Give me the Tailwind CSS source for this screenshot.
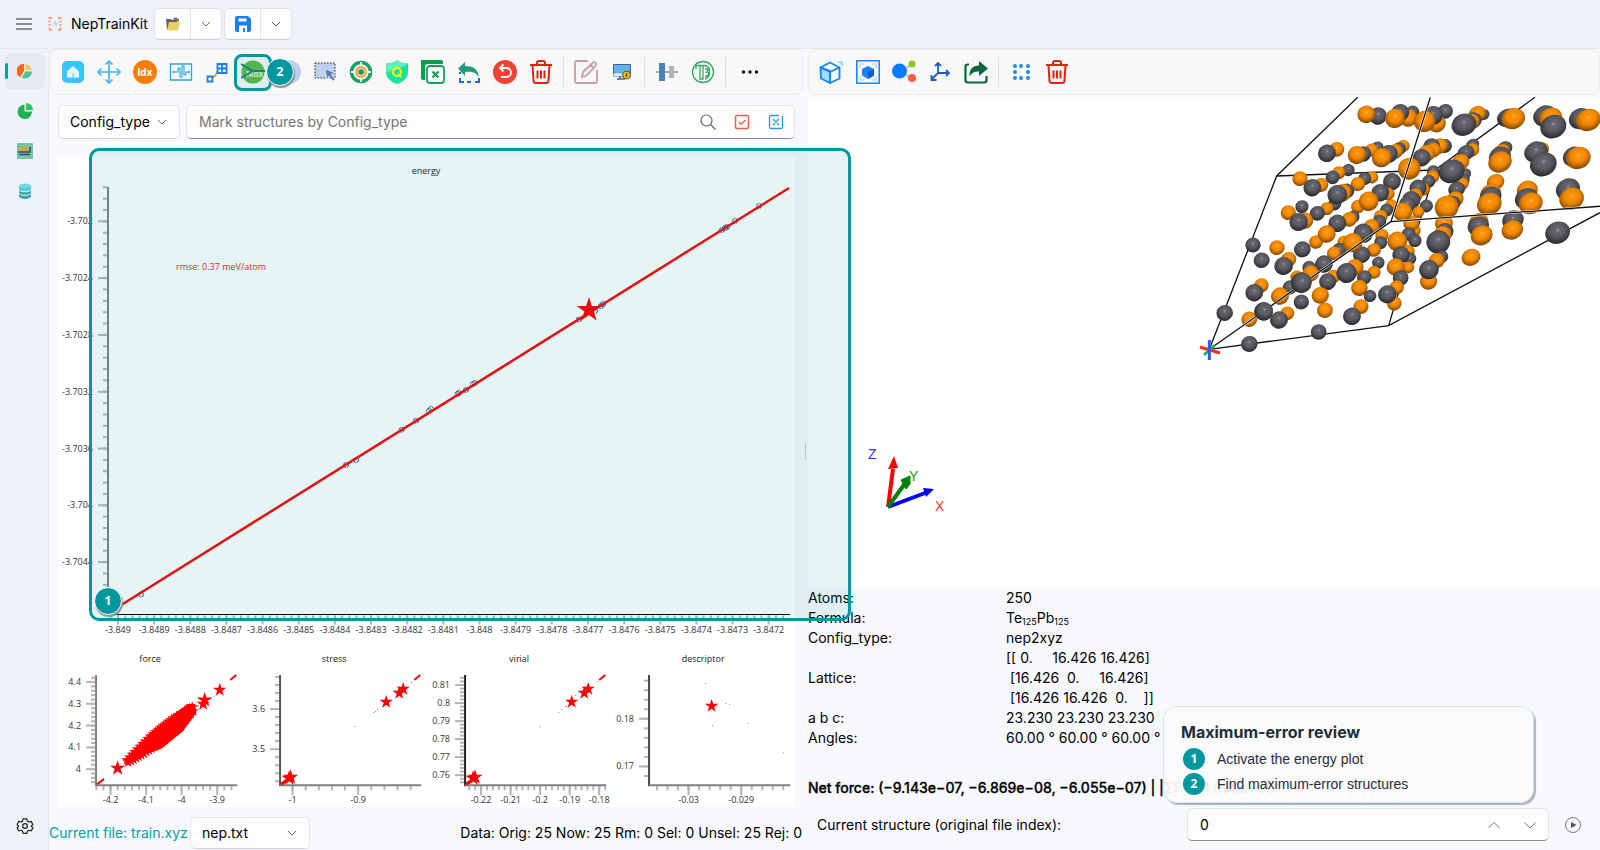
<!DOCTYPE html>
<html lang="en">
<head>
  <meta charset="UTF-8" />
  <meta name="viewport" content="width=device-width, initial-scale=1.0"/>
  <title>NepTrainKit</title>
  <script src="https://cdn.jsdelivr.net/npm/@tailwindcss/browser@4"></script>
</head>
<body class="bg-[#eff3f9] text-black text-sm leading-5 font-['Inter','Liberation_Sans',sans-serif] min-h-screen flex flex-col overflow-hidden">

  <!-- TITLE BAR -->
  <header class="h-12 shrink-0 flex items-center pl-4">
    <button aria-label="Menu" class="w-4 h-4">
      <svg viewBox="0 0 16 16" class="w-4 h-4" stroke="#6b6b6b" stroke-width="1.6"><path d="M0 3h16M0 8h16M0 13h16"/></svg>
    </button>
    <svg viewBox="0 0 14 14" class="w-[14px] h-[14px] ml-4 mr-2" fill="none">
      <path d="M1.500 0v14M12.500 0v14" stroke="#f59a9a" stroke-width="2" stroke-dasharray="2 1.500"/>
      <path d="M1 1h3M10 1h3M1 13h3M10 13h3" stroke="#f9a27a" stroke-width="2"/>
      <path d="M5 10l2-6 1 5 2-5" stroke="#a9d8f3" stroke-width="1"/>
    </svg>
    <h1 class="w-[84px] pl-px">NepTrainKit</h1>
    <div class="flex h-8 bg-[#fdfdfe] border border-[#e0e3e8] border-b-[#c8cbd0] rounded-[5px]">
      <button aria-label="Open" class="w-9 flex items-center justify-center border-r border-[#e0e3e8]">
        <svg viewBox="0 0 16 16" class="w-4 h-4"><path d="M1 3h5l1 1h5v10H2z" fill="#5f6368"/><path d="M8 2.500c2-1.500 4-1 5 .5l1-.5v3h-3l1-1c-1-1-2-1-3 0z" fill="#777"/><path d="M4 6h11l-2 8.500H2z" fill="#e6cf63"/></svg>
      </button>
      <button aria-label="Open options" class="w-[30px] flex items-center justify-center"><svg viewBox="0 0 10 10" class="w-[10px] h-[10px]" fill="none" stroke="#666"><path d="M1 3l4 4 4-4"/></svg></button>
    </div>
    <div class="flex h-8 ml-[2px] bg-[#fdfdfe] border border-[#e0e3e8] border-b-[#c8cbd0] rounded-[5px]">
      <button aria-label="Save" class="w-9 flex items-center justify-center border-r border-[#e0e3e8]">
        <svg viewBox="0 0 16 16" class="w-4 h-4"><path d="M2 0h11l3 3v11a2 2 0 0 1-2 2H2a2 2 0 0 1-2-2V2a2 2 0 0 1 2-2z" fill="#1a7ff0"/><path d="M3.500 2.500h8v3h-8zM4 9.500h8V16h-2v-4H8v4H4z" fill="#fff"/></svg>
      </button>
      <button aria-label="Save options" class="w-[30px] flex items-center justify-center"><svg viewBox="0 0 10 10" class="w-[10px] h-[10px]" fill="none" stroke="#666"><path d="M1 3l4 4 4-4"/></svg></button>
    </div>
  </header>

  <div class="flex flex-1">
    <!-- SIDE NAV -->
    <nav class="w-12 shrink-0 border-t border-[#e2e6ec] flex flex-col items-center pl-[2px] pt-1 pb-3">
      <button aria-label="Results" class="relative w-10 h-9 mb-[2px] rounded-md bg-[#e6eaf0] flex items-center justify-center">
        <span class="absolute left-0 top-[10px] w-[3px] h-4 rounded bg-[#009faa]"></span>
        <svg viewBox="0 0 16 16" class="w-4 h-4"><path d="M7 1v7l-4 6A7 7 0 0 1 7 1z" fill="#fb6514"/><path d="M8.500 1a7 7 0 0 1 6 6h-6z" fill="#fbc35c"/><path d="M8.500 8.500H15a7 7 0 0 1-10.500 6z" fill="#57c08f"/></svg>
      </button>
      <button aria-label="Chart" class="w-10 h-10 flex items-center justify-center"><svg viewBox="0 0 16 16" class="w-4 h-4" fill="#20b04f"><path d="M7.500 1.500v7H15a7.200 7.200 0 1 1-7.500-7z"/><path d="M9 0a7 7 0 0 1 7 7H9z" fill="#2fbf5e"/></svg></button>
      <button aria-label="Make data" class="w-10 h-10 flex items-center justify-center"><svg viewBox="0 0 16 16" class="w-4 h-4"><rect width="16" height="16" rx="1" fill="#74c5a7"/><path d="M3 3.500h4v5H3zM8 3.500h3v5H8z" fill="#f29c38"/><path d="M1 9h12V4M2 11.500h11" fill="none" stroke="#34515e" stroke-width="1.500"/></svg></button>
      <button aria-label="Database" class="w-10 h-10 flex items-center justify-center"><svg viewBox="0 0 16 16" class="w-4 h-4"><path d="M2 3v10c0 4 12 4 12 0V3z" fill="#41a3ab"/><path d="M2 3v4c0 3 12 3 12 0V3z" fill="#56c8d4"/><ellipse cx="8" cy="3" rx="6" ry="2.500" fill="#6fdbe6"/><path d="M2 6.500c0 3 12 3 12 0M2 10c0 3 12 3 12 0" fill="none" stroke="#d9f4f6"/></svg></button>
      <button aria-label="Settings" class="mt-auto w-10 h-6 flex items-center justify-center"><svg viewBox="0 0 24 24" class="w-[18px] h-[18px]" fill="none" stroke="#222" stroke-width="1.600" stroke-linejoin="round"><path d="M9.500 2.500h5l.7 3 2 1.200 3-.9 2.300 4.200-2.200 2.200 0 0 2.200 2.300-2.300 4.100-3-.9-2 1.200-.7 3h-5l-.7-3-2-1.200-3 .9-2.300-4.100 2.200-2.300-2.200-2.200 2.300-4.200 3 .9 2-1.200z"/><circle cx="12" cy="12" r="3.200"/></svg></button>
    </nav>

    <!-- WORKSPACE -->
    <main class="flex-1 min-w-0 flex bg-[#f8f9fd] border-t border-l border-[#e2e6ec] rounded-tl-lg">

      <!-- LEFT: PLOTS -->
      <section class="w-[754px] grow flex flex-col">
        <div class="relative h-[46px] ml-px flex items-center pl-1 bg-[#f8f8f8] border border-[#ececef] rounded-lg">
          <button aria-label="Home" class="w-9 flex justify-center"><svg viewBox="0 0 24 24" class="w-6 h-6"><rect x="1" y="1" width="22" height="22" rx="5" fill="#38c4fd"/><path d="M6.500 11.500L12 6.500l5.500 5V17h-11z" fill="#e8fbff" stroke="#e8fbff" stroke-linejoin="round"/><path d="M11 13h2.500v4H11z" fill="#9fe4fd"/></svg></button>
          <button aria-label="Pan" class="w-9 flex justify-center"><svg viewBox="0 0 24 24" class="w-6 h-6" fill="none" stroke="#42b4fb" stroke-width="1.700"><path d="M12 1v22M1 12h22M8.500 4.500L12 1l3.500 3.500M8.500 19.500L12 23l3.500-3.500M4.500 8.500L1 12l3.500 3.500M19.500 8.500L23 12l-3.500 3.500"/></svg></button>
          <button aria-label="Select by index" class="w-9 flex justify-center"><span class="w-6 h-6 rounded-full bg-[#f97d05] text-white text-[10px] leading-6 font-bold text-center">Idx</span></button>
          <button aria-label="Range" class="w-9 flex justify-center"><svg viewBox="0 0 24 24" class="w-6 h-6" fill="none" stroke="#2da2e0" stroke-width="1.300"><path d="M1.500 4h21v16h-21z"/><path d="M3 12h6V8h2v9h2V6h2v9h2v-3h4M5 10.500v3M20 10.500v3" stroke-width="1.100"/></svg></button>
          <button aria-label="Sample" class="w-9 flex justify-center"><svg viewBox="0 0 24 24" class="w-6 h-6" fill="none"><path d="M6 18l4-2 3-5" stroke="#f59c1a" stroke-width="1.800"/><path d="M12.500 4h9v9h-9zM17 4v9M12.500 8.500h9M2.500 16.500h5v5h-5z" stroke="#1b80e3" stroke-width="1.800"/></svg></button>
          <button aria-label="Max error" class="w-9 flex justify-center"><svg viewBox="0 0 24 24" class="w-6 h-6"><circle cx="12" cy="12" r="11.500" fill="#5cb944"/><text x="5" y="17" font-size="8" font-weight="700" fill="#d8f0d0">Mdx</text><path d="M0 4l12 7h12M12 11L0 18" fill="none" stroke="#1d7d7a" stroke-width="2"/></svg></button>
          <button aria-label="Sparse" class="w-9 flex justify-center"><svg viewBox="0 0 24 24" class="w-6 h-6"><circle cx="12" cy="12" r="12" fill="#bccdf0"/><circle cx="6" cy="12" r="10" fill="#7a9de0"/></svg></button>
          <button aria-label="Box select" class="w-9 flex justify-center"><svg viewBox="0 0 24 24" class="w-6 h-6"><path d="M2 3h20v15H2z" fill="#bfd0ee" stroke="#222" stroke-dasharray="1.500 1.500"/><path d="M12 9l10 4-4 1.500 4 5-2 1.500-4-5-2 3z" fill="#4a82b8" stroke="#fff" stroke-width=".5"/></svg></button>
          <button aria-label="Locate" class="w-9 flex justify-center"><svg viewBox="0 0 24 24" class="w-6 h-6" fill="none"><circle cx="12" cy="12" r="9.500" stroke="#12a365" stroke-width="3.500"/><path d="M12 2v5M12 17v5M2 12h5M17 12h5" stroke="#fff" stroke-width="1.800"/><circle cx="12" cy="12" r="4.700" stroke="#f8a340" stroke-width="2.400"/><circle cx="12" cy="12" r="2.800" fill="#079a60"/></svg></button>
          <button aria-label="Quality" class="w-9 flex justify-center"><svg viewBox="0 0 24 24" class="w-6 h-6"><path d="M12 0c3 2.500 7 3.500 11 3.500V12c0 6-5 10-11 12C6 22 1 18 1 12V3.500C5 3.500 9 2.500 12 0z" fill="#16e69b"/><path d="M12 0C9 2.500 5 3.500 1 3.500V12c2 1 17-4 22-8.500C19 3.500 15 2.500 12 0z" fill="#5df0b8"/><circle cx="12" cy="12" r="4" fill="none" stroke="#f4f317" stroke-width="2.200"/><path d="M13 14l3 3" stroke="#f4f317" stroke-width="2.200"/></svg></button>
          <button aria-label="Remove duplicates" class="w-9 flex justify-center"><svg viewBox="0 0 24 24" class="w-6 h-6" fill="none"><path d="M0 0h20a2 2 0 0 1 2 2v2H7a3 3 0 0 0-3 3v13H2a2 2 0 0 1-2-2z" fill="#0a9d4e"/><rect x="6" y="6" width="17" height="17" rx="3" fill="#fff" stroke="#16a45a" stroke-width="1.800"/><path d="M11.500 11.500l6 6M17.500 11.500l-6 6" stroke="#0a9d4e" stroke-width="2.200"/></svg></button>
          <button aria-label="Invert selection" class="w-9 flex justify-center"><svg viewBox="0 0 24 24" class="w-6 h-6" fill="none"><path d="M8 2v4c8 0 13 3 14 11-3-5-8-6-14-5v4L1 8.500z" fill="#219a80"/><path d="M3 14v-2M3 18v4h4M10 22h4M18 22h4v-4" stroke="#2563e0" stroke-width="2"/></svg></button>
          <button aria-label="Undo" class="w-9 flex justify-center"><svg viewBox="0 0 24 24" class="w-6 h-6"><circle cx="12" cy="12" r="12" fill="#f24236"/><path d="M10.500 4.500L7 8l3.500 3.500M7 8h6.500a4.500 4.500 0 0 1 0 9H8" fill="none" stroke="#fff" stroke-width="1.800"/></svg></button>
          <button aria-label="Delete" class="w-9 flex justify-center"><svg viewBox="0 0 24 24" class="w-6 h-6" fill="none" stroke="#dc2410" stroke-width="2"><path d="M1 5h22M8 5V3a2 2 0 0 1 2-2h4a2 2 0 0 1 2 2v2M3.500 5l1 15.500A2.500 2.500 0 0 0 7 23h10a2.500 2.500 0 0 0 2.500-2.500l1-15.500M8.500 10.500v8M12 10.500v8M15.500 10.500v8"/></svg></button>
          <span class="w-px h-[30px] mx-1 bg-[#dddfe2]"></span>
          <button aria-label="Edit info" class="w-9 flex justify-center"><svg viewBox="0 0 24 24" class="w-6 h-6" fill="none" stroke="#cb9da0" stroke-width="1.800"><path d="M14 1H2.500A1.500 1.500 0 0 0 1 2.500v19A1.500 1.500 0 0 0 2.500 23h19a1.500 1.500 0 0 0 1.500-1.500V10M8 17l1-5L19 2.500a2.200 2.200 0 0 1 3 3L12.500 15.500zM16.500 5l3 3"/></svg></button>
          <button aria-label="Export" class="w-9 flex justify-center"><svg viewBox="0 0 24 24" class="w-6 h-6"><path d="M3.500 4.500h17V16h-17z" fill="#63b3ea" stroke="#38658c"/><path d="M3.500 13.500h17V16h-17z" fill="#e6eef5"/><path d="M10 16v3M7 19h8" stroke="#38658c" stroke-width="1.500"/><circle cx="16.500" cy="15" r="4" fill="#f6bf20" stroke="#4b5157"/><path d="M16.500 13v4" stroke="#4b5157" stroke-width="1.500"/></svg></button>
          <span class="w-px h-[30px] mx-1 bg-[#dddfe2]"></span>
          <button aria-label="Align" class="w-9 flex justify-center"><svg viewBox="0 0 24 24" class="w-6 h-6"><path d="M1 12h22" stroke="#888" stroke-width="1.500"/><path d="M4 3h6v18H4z" fill="#4b7fb5"/><path d="M14 6h5v12h-5z" fill="#b3b3b3"/></svg></button>
          <button aria-label="DFT D3" class="w-9 flex justify-center"><svg viewBox="0 0 24 24" class="w-6 h-6" fill="none" stroke="#32a860" stroke-width="1.300"><circle cx="12" cy="12" r="10.500"/><path d="M5 9V5.500h9c6 1 6 12 0 13.500M9 5.500V19h3V5.500M14 9h4l-2.500 3c3 0 3 4-1.500 4.500"/></svg></button>
          <span class="w-px h-[30px] mx-1 bg-[#dddfe2]"></span>
          <button aria-label="More" class="w-10 flex justify-center"><svg viewBox="0 0 24 24" class="w-6 h-6" fill="#111"><circle cx="5.500" cy="12" r="1.700"/><circle cx="12" cy="12" r="1.700"/><circle cx="18.500" cy="12" r="1.700"/></svg></button>
          <span class="absolute left-[183px] top-1 w-[38px] h-[37px] rounded-lg border-3 border-[#00989e] bg-[#00989e]/10"></span>
          <span class="absolute left-[215px] top-2 w-7 h-7 rounded-full border border-white bg-[#00989e] text-white text-xs leading-[26px] font-bold text-center shadow-[1px_2px_1px_#8a9499] font-['Open_Sans',sans-serif]">2</span>
        </div>

        <div class="flex gap-[6px] mt-[10px] pl-[9px] pr-[8px]">
          <button class="w-[122px] h-[34px] flex items-center justify-between pl-[11px] pr-3 bg-[#fdfdfe] border border-[#e3e5ea] border-b-[#d2d4d8] rounded-[5px]">Config_type
            <svg viewBox="0 0 10 10" class="w-[10px] h-[10px]" fill="none" stroke="#666"><path d="M1 3l4 4 4-4"/></svg>
          </button>
          <div class="flex-1 h-[34px] flex items-center pl-3 pr-[10px] gap-[18px] bg-[#fdfdfe] border border-[#e3e5ea] border-b-[#8c8c8e] rounded-[5px]">
            <input type="text" aria-label="Mark structures" placeholder="Mark structures by Config_type" class="flex-1 outline-none placeholder:text-[#757575]">
            <button aria-label="Search"><svg viewBox="0 0 16 16" class="block w-4 h-4" fill="none" stroke="#666" stroke-width="1.200"><circle cx="6.500" cy="6.500" r="5.500"/><path d="M10.500 10.500l5 5"/></svg></button>
            <button aria-label="Check"><svg viewBox="0 0 16 16" class="block w-4 h-4" fill="none" stroke="#e8604f" stroke-width="1.500"><rect x="1.500" y="1.500" width="13" height="13" rx="1.500"/><path d="M5 8l2.200 2.200L11.500 6"/></svg></button>
            <button aria-label="Uncheck"><svg viewBox="0 0 16 16" class="block w-4 h-4" fill="none" stroke="#2b9ce0" stroke-width="1.300"><path d="M11 1.500H3A1.500 1.500 0 0 0 1.500 3v10A1.500 1.500 0 0 0 3 14.500h10a1.500 1.500 0 0 0 1.500-1.500V2M5 5l6 6M11 5l-6 6"/></svg></button>
          </div>
        </div>

        <div class="relative ml-[9px] mr-2 mt-[18px] bg-white font-['Open_Sans','Noto_Sans',sans-serif]">
          <svg id="energy" viewBox="0 0 737 490" class="block w-full text-[9px]"></svg>
          <div class="grid grid-cols-4">
            <svg id="force" viewBox="0 0 184 160" class="block w-full text-[9px] overflow-visible"></svg>
            <svg id="stress" viewBox="0 0 184 160" class="block w-full text-[9px] overflow-visible"></svg>
            <svg id="virial" viewBox="0 0 184 160" class="block w-full text-[9px] overflow-visible"></svg>
            <svg id="descriptor" viewBox="0 0 184 160" class="block w-full text-[9px] overflow-visible"></svg>
          </div>
          <div class="absolute z-10 left-[31px] -right-[56px] -top-[9px] h-[473px] rounded-[10px] border-3 border-[#00989e] bg-[#00989e]/10 pointer-events-none"></div>
          <span class="absolute z-10 left-[36px] top-[430px] w-7 h-7 rounded-full border border-white bg-[#00989e] text-white text-xs leading-[26px] font-bold text-center shadow-[1px_2px_1px_#8a9499]">1</span>
        </div>

        <div class="flex items-center mt-[10px] pr-px">
          <span class="w-[141px] text-[#009faa] whitespace-nowrap">Current file: train.xyz</span>
          <button class="w-[120px] h-8 flex items-center justify-between pl-[11px] pr-3 bg-[#fdfdfe] border border-[#e3e5ea] border-b-[#d2d4d8] rounded-[5px]">nep.txt
            <svg viewBox="0 0 10 10" class="w-[10px] h-[10px]" fill="none" stroke="#666"><path d="M1 3l4 4 4-4"/></svg>
          </button>
          <span class="ml-auto whitespace-nowrap">Data: Orig: 25 Now: 25 Rm: 0 Sel: 0 Unsel: 25 Rej: 0</span>
        </div>
      </section>

      <!-- SPLITTER -->
      <div class="w-[5px] shrink-0 flex items-center justify-center"><span class="h-[17px] mt-1 border-l border-dotted border-[#aaa]"></span></div>

      <!-- RIGHT: STRUCTURE -->
      <section class="w-[792px] grow flex flex-col">
        <div class="h-[46px] flex items-center pl-1 bg-[#f8f8f8] border border-[#ececef] rounded-lg">
          <button aria-label="Projection" class="w-9 flex justify-center"><svg viewBox="0 0 24 24" class="w-6 h-6" fill="none" stroke="#1785f5" stroke-width="1.900" stroke-linejoin="round"><path d="M1.500 7.500L11 11v12L2 18.500z" fill="#a6dcfa"/><path d="M11 2.500l9.500 5L11 12 1.500 7.500zM20.500 7.500v11L11 23V12z"/><path d="M18 1h6v6z" fill="#a6dcfa" stroke="none"/></svg></button>
          <button aria-label="Auto view" class="w-9 ml-px flex justify-center"><svg viewBox="0 0 24 24" class="w-6 h-6" fill="none"><path d="M.8.8h22.400v22.400H.8z" stroke="#2183f3" stroke-width="1.600"/><path d="M4 8V4h4M16 4h4v4M20 16v4h-4M8 20H4v-4" stroke="#bcd9f9" stroke-width="1.500"/><path d="M12 6l6 3v6.500L12 19l-6-3.500V9z" fill="#1785f5"/><path d="M12 12l6-3v6.500L12 19z" fill="#0b62c4"/></svg></button>
          <button aria-label="Bonds" class="w-9 flex justify-center"><svg viewBox="0 0 24 24" class="w-6 h-6"><path d="M8 11l12-6M8 11l12 7" stroke="#c9c9c9" stroke-width="2"/><circle cx="7.500" cy="11" r="7.500" fill="#0a7cff"/><circle cx="20" cy="4" r="3.500" fill="#8cc91b"/><circle cx="20" cy="18" r="4" fill="#fb5c48"/></svg></button>
          <button aria-label="Axes" class="w-9 flex justify-center"><svg viewBox="0 0 24 24" class="w-6 h-6" fill="none" stroke="#2458c5" stroke-width="1.800"><path d="M10 3v10h11M10 13l-6 6M7 6l3-3 3 3M18 10l3 3-3 3M3.500 15v5h5"/></svg></button>
          <button aria-label="Share" class="w-9 flex justify-center"><svg viewBox="0 0 24 24" class="w-6 h-6"><path d="M5 4.500H3.500A2 2 0 0 0 1.500 6.500V20a2.500 2.500 0 0 0 2.500 2.500h16a2.500 2.500 0 0 0 2.500-2.500v-4" fill="none" stroke="#06683c" stroke-width="2.200"/><path d="M15 1l9 7.500-9 7.500v-4.500c-5 0-8 2-9.500 5C5 9.500 8.500 5.500 15 5.500z" fill="#06683c"/></svg></button>
          <span class="w-px h-[30px] mx-1 bg-[#dddfe2]"></span>
          <button aria-label="Supercell" class="w-9 flex justify-center"><svg viewBox="0 0 24 24" class="w-6 h-6" fill="#1c8be0"><circle cx="6" cy="6" r="2"/><circle cx="12" cy="6" r="2"/><circle cx="19" cy="6" r="2"/><circle cx="6" cy="12" r="2"/><circle cx="19" cy="12" r="2"/><circle cx="6" cy="18" r="2"/><circle cx="12" cy="18" r="2"/><circle cx="19" cy="18" r="2"/></svg></button>
          <button aria-label="Delete structure" class="w-9 flex justify-center"><svg viewBox="0 0 24 24" class="w-6 h-6" fill="none" stroke="#dc2410" stroke-width="2"><path d="M1 5h22M8 5V3a2 2 0 0 1 2-2h4a2 2 0 0 1 2 2v2M3.500 5l1 15.500A2.500 2.500 0 0 0 7 23h10a2.500 2.500 0 0 0 2.500-2.500l1-15.500M8.500 10.500v8M12 10.500v8M15.500 10.500v8"/></svg></button>
        </div>

        <svg id="scene" viewBox="0 0 792 490" class="block w-full mt-[2px] bg-white">
          <defs>
            <radialGradient id="orange" cx=".55" cy=".4" r=".62"><stop offset="0" stop-color="#ffb450"/><stop offset=".15" stop-color="#ff930c"/><stop offset=".5" stop-color="#f08800"/><stop offset="1" stop-color="#7a4400"/></radialGradient>
            <radialGradient id="gray" cx=".55" cy=".4" r=".62"><stop offset="0" stop-color="#9a9ba2"/><stop offset=".15" stop-color="#66676f"/><stop offset=".5" stop-color="#585960"/><stop offset="1" stop-color="#26272b"/></radialGradient>
          </defs>
          <g id="cell" transform="translate(382 -7) scale(.3333)"></g>
          <!-- orientation gizmo -->
          <g stroke-width="4">
            <path d="M80 410l37-14" stroke="#00f"/><path d="M115 391l11 1-8 8z" fill="#00f"/>
            <path d="M80 410l5-38" stroke="red"/><path d="M80 372l6-13 4 12z" fill="red"/>
            <path d="M80 410l18-25" stroke="#008000"/><path d="M93 383l9-4 0 8-4 5z" fill="#008000" stroke="#008000" stroke-width="1"/>
          </g>
          <g class="font-['Liberation_Sans',sans-serif] text-sm">
            <text x="60" y="362" fill="#3030ff">Z</text><text x="101" y="384" fill="#209020">Y</text><text x="127" y="414" fill="#ff3030">X</text>
          </g>
        </svg>

        <table class="mt-px w-full border-collapse">
          <tbody>
            <tr><th class="w-[198px] p-0 text-left font-normal">Atoms:</th><td class="p-0">250</td></tr>
            <tr><th class="p-0 text-left font-normal">Formula:</th><td class="p-0">Te<sub class="text-[9px] leading-none">125</sub>Pb<sub class="text-[9px] leading-none">125</sub></td></tr>
            <tr><th class="p-0 text-left font-normal">Config_type:</th><td class="p-0">nep2xyz</td></tr>
            <tr><th class="p-0 text-left font-normal">Lattice:</th><td class="p-0 whitespace-pre">[[ 0.     16.426 16.426]
 [16.426  0.     16.426]
 [16.426 16.426  0.    ]]</td></tr>
            <tr><th class="p-0 text-left font-normal">a b c:</th><td class="p-0">23.230 23.230 23.230</td></tr>
            <tr><th class="p-0 text-left font-normal">Angles:</th><td class="p-0">60.00 ° 60.00 ° 60.00 °</td></tr>
          </tbody>
        </table>
        <div class="relative">
          <p class="mt-[30px] font-medium [-webkit-text-stroke:0.3px_black] whitespace-nowrap">Net force: (−9.143e−07, −6.869e−08, −6.055e−07) | |ΣF| = 1.099e−06</p>
          <!-- STEP CARD -->
          <aside class="absolute right-[66px] -top-[42px] w-[371px] h-[97px] rounded-[14px] border border-[#d6e4e9] bg-[#fbfbfb]/95 shadow-[2px_2px_1px_#aab4b8] pl-[17px] pt-[15px] text-[#1f2d3a] font-['Liberation_Sans',sans-serif]">
            <h2 class="text-base leading-5 font-bold font-['Inter',sans-serif]">Maximum-error review</h2>
            <ol class="mt-1 pl-[2px]">
              <li class="flex items-center gap-3 h-[25px]"><span class="w-[22px] h-[22px] rounded-full bg-[#00989e] text-white text-xs leading-[22px] font-bold text-center font-['Open_Sans',sans-serif]">1</span>Activate the energy plot</li>
              <li class="flex items-center gap-3 h-[25px]"><span class="w-[22px] h-[22px] rounded-full bg-[#00989e] text-white text-xs leading-[22px] font-bold text-center font-['Open_Sans',sans-serif]">2</span>Find maximum-error structures</li>
            </ol>
          </aside>
        </div>
        <div class="flex items-center mt-[10px] pl-[9px] pr-[19px]">
          <label for="frame" class="flex-1">Current structure (original file index):</label>
          <div class="w-[362px] h-[33px] flex items-center pl-3 pr-3 gap-6 bg-[#fdfdfe] border border-[#e3e5ea] border-b-[#8c8c8e] rounded-[5px]">
            <input id="frame" type="text" inputmode="numeric" value="0" class="flex-1 min-w-0 outline-none">
            <button aria-label="Next"><svg viewBox="0 0 12 12" class="block w-3 h-3" fill="none" stroke="#777"><path d="M.5 9L6 3.500 11.500 9"/></svg></button>
            <button aria-label="Previous"><svg viewBox="0 0 12 12" class="block w-3 h-3" fill="none" stroke="#777"><path d="M.5 3.500L6 9l5.500-5.500"/></svg></button>
          </div>
          <button aria-label="Play" class="ml-4"><svg viewBox="0 0 16 16" class="block w-4 h-4"><circle cx="8" cy="8" r="7.500" fill="none" stroke="#777"/><path d="M6 5l5.500 3L6 11z" fill="#555"/></svg></button>
        </div>
      </section>
    </main>
  </div>

  <script>
    const NS = "http://www.w3.org/2000/svg";

    function add(parent, tag, attrs, text) {
      const el = document.createElementNS(NS, tag);
      for (const k in attrs) el.setAttribute(k, attrs[k]);
      if (text !== undefined) el.textContent = text;
      parent.appendChild(el);
      return el;
    }

    function line(svg, x1, y1, x2, y2, color, w) {
      add(svg, "line", { x1, y1, x2, y2, stroke: color, "stroke-width": w });
    }

    function star(svg, cx, cy, r) {
      const pts = [];
      for (let i = 0; i < 10; i++) {
        const a = -Math.PI / 2 + i * Math.PI / 5;
        const rr = i % 2 ? r * 0.38 : r;
        pts.push((cx + rr * Math.cos(a)).toFixed(1) + "," + (cy + rr * Math.sin(a)).toFixed(1));
      }
      add(svg, "polygon", { points: pts.join(" "), fill: "#ff0000" });
    }

    // xt / yt: [label, position] of the major ticks, xm / ym: spacing of the minor ones
    function axes(svg, o) {
      for (let y = o.yt[0][1]; y >= o.top; y -= o.ym) line(svg, o.x - 5, y, o.x - 1, y, "#b4b4b4", 2);
      for (let y = o.yt[0][1]; y < o.bottom; y += o.ym) line(svg, o.x - 5, y, o.x - 1, y, "#b4b4b4", 2);
      for (let x = o.xt[0][1]; x >= o.x; x -= o.xm) line(svg, x, o.bottom + 1, x, o.bottom + 5, "#b4b4b4", 2);
      for (let x = o.xt[0][1]; x <= o.right; x += o.xm) line(svg, x, o.bottom + 1, x, o.bottom + 5, "#b4b4b4", 2);
      o.yt.forEach(([t, y]) => {
        line(svg, o.x - 10, y, o.x - 1, y, "#b4b4b4", 2);
        add(svg, "text", { x: o.x - 15, y: y + 3, "text-anchor": "end", fill: "#333" }, t);
      });
      o.xt.forEach(([t, x]) => {
        line(svg, x, o.bottom + 1, x, o.bottom + 10, "#b4b4b4", 2);
        add(svg, "text", { x, y: o.bottom + 18, "text-anchor": "middle", fill: "#333" }, t);
      });
      line(svg, o.x, o.top, o.x, o.bottom + 1, o.yc || "#808080", 2);
      line(svg, o.x, o.bottom, o.right, o.bottom, o.xc || "#808080", o.xw || 2);
      add(svg, "text", { x: o.tx, y: o.ty, "text-anchor": "middle", fill: "#222" }, o.title);
    }

    const $ = id => document.getElementById(id);

    // energy
    const en = $("energy");
    const ex = ["-3.849","-3.8489","-3.8488","-3.8487","-3.8486","-3.8485","-3.8484","-3.8483","-3.8482","-3.8481","-3.848","-3.8479","-3.8478","-3.8477","-3.8476","-3.8475","-3.8474","-3.8473","-3.8472"];
    const ey = ["-3.702","-3.7024","-3.7028","-3.7032","-3.7036","-3.704","-3.7044"];
    axes(en, {
      title: "energy", tx: 368, ty: 17, x: 50, top: 30, bottom: 457.5, right: 732, xc: "#000", xw: 1,
      yt: ey.map((t, i) => [t, 64.3 + i * 56.8]), ym: 11.36,
      xt: ex.map((t, i) => [t, 60 + i * 36.15]), xm: 7.23
    });
    add(en, "text", { x: 118, y: 113, fill: "#f01818" }, "rmse: 0.37 meV/atom");
    [[83,437.500],[288,308],[298,303],[343.700,272.700],[358,263.700],[371,254],[373,252],[399.500,237],[401,236],[408,233],[415,227],[417,226],[521,162.500],[537,154],[543,149],[545,147],[664,73],[667,71],[669,70],[677,64],[701,49]].forEach(([cx, cy]) =>
      add(en, "circle", { cx, cy, r: 2.5, fill: "none", stroke: "#0a4090", "stroke-dasharray": "3 1" }));
    line(en, 60, 450, 731, 31, "#ff0000", 2.5);
    star(en, 531, 153, 13);

    // force
    const fo = $("force");
    axes(fo, {
      title: "force", tx: 92, ty: 15, x: 38, top: 28, bottom: 138, right: 179,
      yt: [["4.4",35],["4.3",56.7],["4.2",78.5],["4.1",100.3],["4",122]], ym: 4.35,
      xt: [["-4.2",52.5],["-4.1",88],["-4",123.5],["-3.9",159]], xm: 7.1
    });
    line(fo, 39, 137, 46, 132, "red", 2);
    line(fo, 172, 33, 178, 28, "red", 2);
    add(fo, "path", { d: "M148 56h1M155 50h1M45 131h1M138 59h3", stroke: "#4a90d0" });
    add(fo, "polygon", { fill: "#f00", points: "78,101 92,86 112,71 129,57 137,57 138,66 125,84 104,101 88,107 80,110" });
    for (let i = 0; i < 26; i++) {
      const t = i / 25, s = Math.sin(t * Math.PI) * 5;
      star(fo, 69 + t * 65, 113 - t * 53 - s, 6);
      star(fo, 70 + t * 65, 115 - t * 51 + s, 6);
    }
    star(fo, 59.5, 121, 8); star(fo, 145, 57, 7); star(fo, 146.500, 53, 8); star(fo, 161.500, 43, 7);

    // stress
    const st = $("stress");
    axes(st, {
      title: "stress", tx: 92, ty: 15, x: 38, top: 28, bottom: 138, right: 179, yc: "#555",
      yt: [["3.6",62],["3.5",102]], ym: 8, xt: [["-1",50.5],["-0.9",116]], xm: 13.1
    });
    line(st, 39, 137, 46, 132, "red", 3);
    line(st, 172, 33, 178, 28, "red", 2);
    add(st, "path", { d: "M112 79.500h1M131 65.500h1M133 64.500h1M135 62.500h1M169 35.500h1M147 53h1", stroke: "#4a90d0" });
    star(st, 47, 131, 8); star(st, 48.500, 130, 8); star(st, 144, 55, 7); star(st, 157, 46, 7); star(st, 161, 42, 7);

    // virial
    const vi = $("virial");
    axes(vi, {
      title: "virial", tx: 92, ty: 15, x: 38, top: 28, bottom: 138, right: 179, yc: "#222",
      yt: [["0.81",38],["0.8",56],["0.79",74],["0.78",92],["0.77",110],["0.76",128]], ym: 3.6,
      xt: [["-0.22",54],["-0.21",83.500],["-0.2",113],["-0.19",142.500],["-0.18",172]], xm: 5.9
    });
    line(vi, 39, 137, 46, 132, "red", 3);
    line(vi, 172, 33, 178, 28, "red", 2);
    add(vi, "path", { d: "M112 80h1M131 65.500h1M134 62.500h1M138 59.500h2M148 48.500h1M170 34.500h1", stroke: "#4a90d0" });
    star(vi, 46, 131, 8); star(vi, 48, 130, 8); star(vi, 144.500, 55, 7); star(vi, 157, 46, 7); star(vi, 161, 42, 7);

    // descriptor
    const de = $("descriptor");
    axes(de, {
      title: "descriptor", tx: 92, ty: 15, x: 38, top: 28, bottom: 138, right: 179, yc: "#444",
      yt: [["0.18",71.7],["0.17",119.3]], ym: 9.52, xt: [["-0.03",77.500],["-0.029",130]], xm: 10.5
    });
    add(de, "path", { d: "M94 36.500h1M114 56.500h1M118 57.500h1M101 78.500h1M136 76.500h1M172 105.500h1", stroke: "#888" });
    star(de, 100.500, 59, 7);

    // unit cell, atoms listed back to front: x, y, radius, g(ray) / o(range)
    const cell = $("cell");
    const edge = pts => {
      add(cell, "polyline", { points: pts, fill: "none", stroke: "#111", "stroke-width": 4 });
    };
    const atoms = [
      [475,240,19,"g"],[447,248,20,"o"],[428,262,21,"g"],[393,285,22,"o"],[330,266,23,"o"],[367,293,27,"g"],
      [546,262,19,"o"],[524,266,20,"g"],[504,282,22,"o"],[470,303,23,"g"],[458,308,27,"o"],[434,342,20,"g"],[442,314,30,"g"],
      [336,350,20,"g"],[295,368,23,"o"],[411,356,20,"o"],[382,370,23,"g"],[345,392,25,"o"],[326,396,28,"g"],
      [189,465,23,"g"],[215,511,24,"g"],[261,473,23,"o"],[296,508,23,"o"],[281,528,28,"g"],[337,478,25,"g"],[378,456,21,"o"],
      [214,586,22,"o"],[193,608,27,"g"],[440,178,23,"o"],[411,190,27,"g"],
      [563,172,18,"g"],[545,180,20,"o"],[520,192,24,"g"],[501,195,28,"o"],[640,168,19,"o"],[628,176,20,"g"],[616,184,23,"o"],[596,192,28,"g"],[575,203,30,"o"],
      [564,78,27,"g"],[529,73,27,"o"],[668,66,20,"g"],[655,84,27,"o"],[631,68,27,"g"],[615,85,30,"o"],
      [766,64,23,"g"],[740,100,28,"o"],[730,76,29,"g"],[704,94,33,"o"],
      [880,74,19,"g"],[862,72,27,"o"],[848,92,28,"g"],[842,96,28,"o"],[822,104,38,"g"],
      [950,84,30,"g"],[957,84,32,"g"],[970,86,36,"o"],
      [1065,78,36,"g"],[1082,84,35,"o"],[1090,110,40,"g"],[1172,86,36,"g"],[1195,90,38,"o"],
      [764,168,22,"g"],[750,168,24,"o"],[725,170,26,"g"],[730,180,23,"o"],[710,190,26,"o"],[695,203,27,"g"],
      [848,164,20,"g"],[846,180,23,"o"],[828,188,26,"g"],[812,216,27,"o"],
      [945,174,23,"g"],[935,185,26,"o"],[930,200,34,"g"],[930,216,36,"o"],
      [1054,178,24,"o"],[1038,186,36,"g"],[1060,223,41,"g"],[1152,200,34,"g"],[1165,204,38,"o"],
      [730,244,19,"g"],[728,260,20,"o"],[716,274,20,"g"],[700,298,20,"o"],[684,294,26,"g"],[676,316,22,"o"],[664,330,28,"g"],[652,344,26,"g"],[709,348,20,"g"],[685,366,18,"o"],
      [825,252,19,"g"],[820,270,20,"g"],[815,282,22,"o"],[800,298,26,"g"],[795,328,27,"o"],[784,342,28,"g"],
      [606,275,27,"g"],[594,312,20,"o"],[571,308,27,"g"],[604,345,18,"o"],[590,360,20,"g"],[504,350,21,"o"],[536,334,30,"o"],
      [572,380,21,"o"],[568,395,21,"g"],[545,410,24,"o"],[520,430,30,"g"],[490,380,19,"g"],[478,388,23,"o"],[442,400,27,"g"],[410,432,27,"o"],
      [576,436,20,"o"],[572,458,20,"g"],[552,480,21,"o"],[515,494,26,"g"],[462,456,20,"o"],[448,480,22,"g"],[432,490,21,"o"],[488,458,30,"o"],
      [402,522,27,"g"],[357,532,20,"g"],[320,560,19,"o"],[362,550,25,"o"],[300,592,22,"g"],[270,618,27,"o"],[334,578,31,"g"],
      [565,518,19,"g"],[552,547,20,"o"],[523,562,22,"g"],[495,532,26,"o"],[430,560,21,"o"],[413,575,26,"g"],[470,549,31,"g"],
      [391,616,26,"o"],[334,636,23,"g"],[405,661,24,"o"],[508,594,25,"o"],[540,618,19,"g"],[513,650,23,"o"],[486,679,27,"g"],[386,726,24,"g"],
      [292,670,21,"o"],[267,690,27,"g"],[178,688,24,"o"],[221,664,28,"g"],[104,669,25,"g"],[178,762,25,"g"],
      [672,422,20,"o"],[664,400,24,"o"],[656,432,21,"g"],[675,452,20,"g"],[622,454,30,"o"],[654,484,20,"o"],[660,506,19,"g"],[633,494,26,"g"],[655,532,18,"o"],[617,531,27,"o"],
      [632,564,24,"g"],[620,592,22,"o"],[613,640,22,"o"],[592,613,28,"g"],
      [762,400,27,"o"],[765,424,26,"g"],[758,434,27,"o"],[745,456,36,"g"],[756,500,19,"g"],[740,512,24,"o"],[716,574,26,"o"],[717,539,30,"g"],
      [917,276,27,"o"],[902,310,32,"o"],[902,320,34,"g"],[898,342,38,"o"],[1012,300,32,"o"],[1010,326,36,"g"],[1022,340,37,"o"],[1134,298,37,"g"],[1145,326,38,"o"],
      [866,396,30,"o"],[865,408,33,"g"],[875,436,34,"o"],[969,390,33,"g"],[967,420,33,"o"],[843,502,29,"o"],[1103,428,38,"g"],
      [638,366,29,"o"],[770,352,36,"o"],[785,244,40,"g"],[658,236,34,"o"]
    ];
    edge("596,707 735,240 260,258"); edge("735,240 1035,22");
    edge("58,778 260,258 503,22");
    edge("58,778 596,707 1230,368");
    // perspective stretches the atoms towards the right
    atoms.forEach(([cx, cy, r, c]) => {
      const k = cx > 780 ? 0.86 : 0.96;
      add(cell, "ellipse", { cx, cy, rx: r, ry: r * k, transform: `rotate(-25 ${cx} ${cy})`, fill: c === "g" ? "url(#gray)" : "url(#orange)" });
    });
    // the front edges pass over the atoms
    add(cell, "path", { d: "M58 778L603 395L1240 348M603 395L721 22", fill: "none", stroke: "#fff", "stroke-width": 7 });
    edge("58,778 603,395 721,22"); edge("603,395 1240,348");
    // origin marker
    line(cell, 30, 771, 90, 789, "#ff2a1a", 9);
    line(cell, 42, 795, 75, 765, "#20b040", 8);
    line(cell, 58, 750, 58, 810, "#2a5bff", 9);
    [[221,664,28],[334,578,31]].forEach(([cx, cy, r]) =>
      add(cell, "ellipse", { cx, cy, rx: r, ry: r, fill: "url(#gray)" }));
  </script>
</body>
</html>
